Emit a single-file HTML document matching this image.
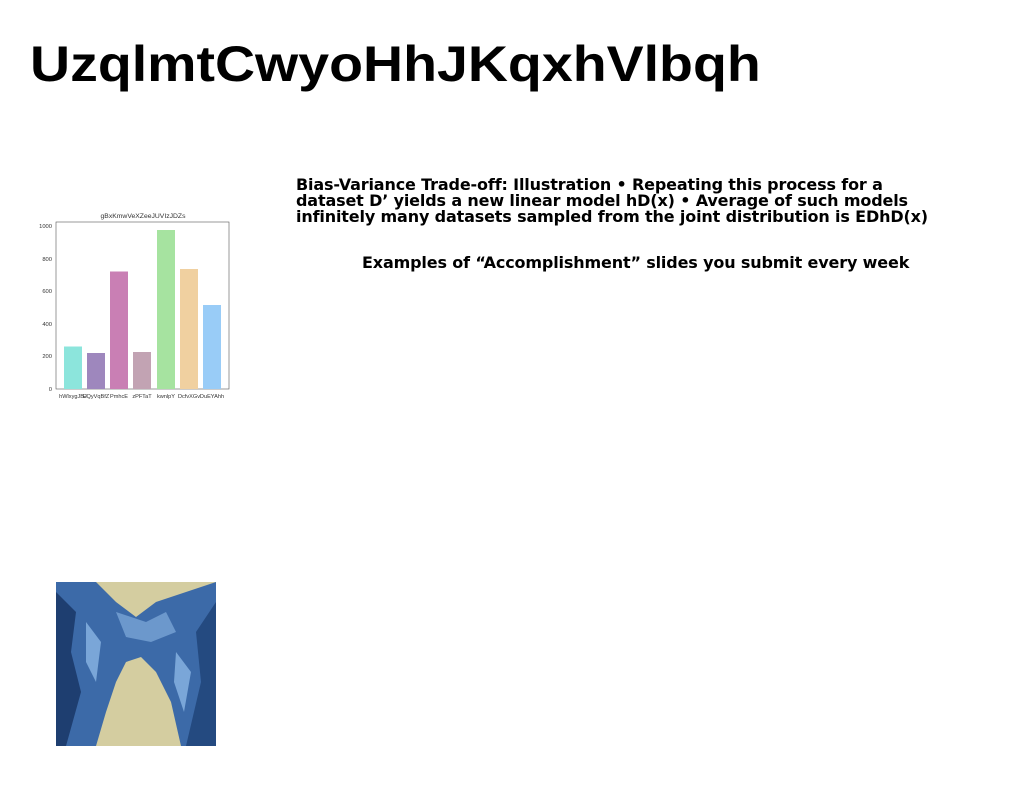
<!DOCTYPE html>
<html><head><style>
body{margin:0;width:1024px;height:788px;background:#fff;position:relative;overflow:hidden;font-family:"Liberation Sans",sans-serif}
h1{position:absolute;left:30px;top:34px;margin:0;font-size:50px;font-weight:bold;line-height:60px;color:#000;transform:scaleX(1.11);transform-origin:0 0;white-space:nowrap}
.t{position:absolute;font-family:"DejaVu Sans",sans-serif;font-weight:bold;font-size:16px;line-height:16px;color:#000;letter-spacing:-0.15px}
</style></head><body>
<h1>UzqlmtCwyoHhJKqxhVlbqh</h1>
<div class="t" style="left:296px;top:177px;width:680px">Bias-Variance Trade-off: Illustration • Repeating this process for a<br>dataset D’ yields a new linear model hD(x) • Average of such models<br>infinitely many datasets sampled from the joint distribution is EDhD(x)</div>
<div class="t" style="left:362px;top:255px;white-space:nowrap">Examples of “Accomplishment” slides you submit every week</div>
<svg style="position:absolute;left:30px;top:205px" width="210" height="200" font-family="Liberation Sans,sans-serif" font-size="5.5" fill="#333">
<text x="113" y="13" text-anchor="middle" font-size="6.8">gBxKmwVeXZeeJUVIzJDZs</text>
<rect x="26" y="17" width="173" height="167" fill="none" stroke="#555" stroke-width="0.6"/>
<g font-size="5.8" text-anchor="end">
<text x="22" y="186">0</text><text x="22" y="153">200</text><text x="22" y="121">400</text><text x="22" y="88">600</text><text x="22" y="56">800</text><text x="22" y="23">1000</text>
</g>
<rect x="34" y="141.5" width="18" height="42.5" fill="#8ce5dc"/>
<rect x="57" y="148" width="18" height="36" fill="#9e87bd"/>
<rect x="80" y="66.5" width="18" height="117.5" fill="#c97fb4"/>
<rect x="103" y="147" width="18" height="37" fill="#c2a3b3"/>
<rect x="127" y="25" width="18" height="159" fill="#a6e3a0"/>
<rect x="150" y="64" width="18" height="120" fill="#f0d0a0"/>
<rect x="173" y="100" width="18" height="84" fill="#99ccf7"/>
<g font-size="5.6" text-anchor="middle">
<text x="43" y="193">hWlxygJBJ</text><text x="66" y="193">EQyVqBfZ</text><text x="89" y="193">PmhcE</text><text x="112" y="193">zPFTaT</text><text x="136" y="193">kwnlpY</text><text x="159" y="193">DcfvXGv</text><text x="182" y="193">DuEYAhh</text>
</g>
</svg>
<svg style="position:absolute;left:56px;top:582px" width="160" height="164">
<rect width="160" height="164" fill="#d4cda0"/>
<path d="M0 0H40L60 20 80 35 100 20 130 10 160 0V164H125L115 120 100 90 85 75 70 80 60 100 50 130 40 164H0Z" fill="#3c6aa8"/>
<path d="M0 10L20 30 15 70 25 110 10 164H0Z" fill="#1e3e70"/>
<path d="M160 20L140 50 145 100 130 164H160Z" fill="#244a80"/>
<path d="M60 30L90 40 110 30 120 50 95 60 70 55Z" fill="#6c98cc"/>
<path d="M30 40L45 60 40 100 30 80Z M120 70L135 90 128 130 118 100Z" fill="#7aa6d8"/>
</svg>
</body></html>
